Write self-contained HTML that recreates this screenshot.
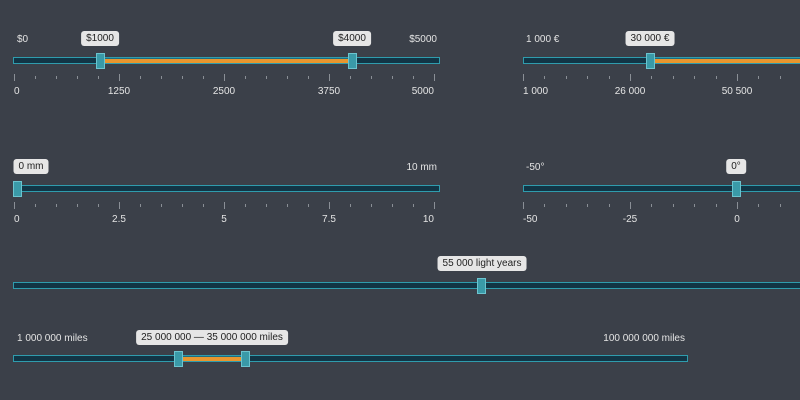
<!DOCTYPE html>
<html><head><meta charset="utf-8"><style>
html,body{margin:0;padding:0}
body{width:800px;height:400px;overflow:hidden;background:#3b4049;position:relative;font-family:"Liberation Sans","DejaVu Sans",sans-serif;font-size:10px;color:#e4e4e4}
.tr{position:absolute;height:5px;background:#123545;border:1px solid #2f9cad;box-sizing:content-box}
.bar{position:absolute;height:4px;margin-top:1px;background:#e8962e;border-top:1px solid #1d6f80}
.h{position:absolute;width:7px;height:14px;background:#3a9aa8;border:1px solid #6cc4cf}
.tip{position:absolute;height:15px;line-height:15px;padding:0 5px;background:#e6e6e6;color:#222;border-radius:3px;transform:translateX(-50%);white-space:nowrap}
.l{position:absolute;white-space:nowrap}
.t{position:absolute;width:1px;background:#8a8f96}
</style></head><body>
<div id="r"></div>
<script>
var r=document.getElementById('r');
function el(c,s,t){var d=document.createElement('div');d.className=c;d.style.cssText=s;if(t)d.textContent=t;r.appendChild(d);}
function slider(x1,x2,y,hs,bar){
 el('tr','left:'+x1+'px;width:'+(x2-x1)+'px;top:'+y+'px');
 if(bar)el('bar','left:'+bar[0]+'px;width:'+(bar[1]-bar[0])+'px;top:'+y+'px');
 hs.forEach(function(h){el('h','left:'+(h-4)+'px;top:'+(y-4)+'px');});
}
function ticks(x0,step,n,y,labels,full){
 for(var i=0;i<n;i++){var x=Math.round(x0+i*step/5);var maj=i%5==0;
  el('t','left:'+x+'px;top:'+(maj?y:y+2)+'px;height:'+(maj?7:3)+'px');}
 labels.forEach(function(l,i){var tf='translateX(-50%)';if(i==0)tf='none';else if(full&&i==labels.length-1)tf='translateX(-100%)';
  el('l','left:'+(x0+i*step)+'px;top:'+(y+12)+'px;transform:'+tf,l);});
}
el('l','left:17px;top:34px','$0');el('l','right:363px;top:34px','$5000');
el('tip','left:100px;top:31px','$1000');el('tip','left:352px;top:31px','$4000');
slider(13,438,57,[100,352],[104,348]);
ticks(14,105,21,74,['0','1250','2500','3750','5000'],true);
el('l','left:526px;top:34px','1 000 €');el('tip','left:650px;top:31px','30 000 €');
slider(523,810,57,[650],[654,810]);
ticks(523,107,15,74,['1 000','26 000','50 500']);
el('tip','left:31px;top:159px','0 mm');el('l','right:363px;top:162px','10 mm');
slider(13,438,185,[17],null);
ticks(14,105,21,202,['0','2.5','5','7.5','10'],true);
el('l','left:526px;top:162px','-50°');el('tip','left:736px;top:159px','0°');
slider(523,810,185,[736],null);
ticks(523,107,15,202,['-50','-25','0']);
el('tip','left:482px;top:256px','55 000 light years');
slider(13,810,282,[481],null);
el('l','left:17px;top:333px','1 000 000 miles');el('l','right:115px;top:333px','100 000 000 miles');
el('tip','left:212px;top:330px','25 000 000 — 35 000 000 miles');
slider(13,686,355,[178,245],[182,241]);
</script>
</body></html>
